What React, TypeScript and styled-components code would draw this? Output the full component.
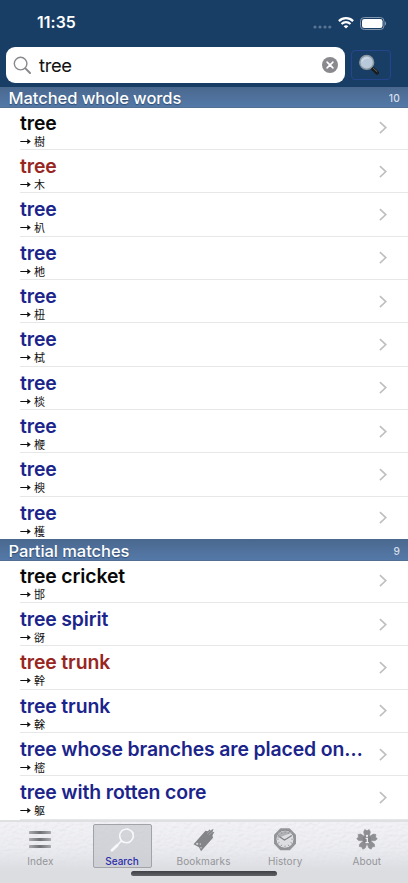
import React from "react";
import styled, { createGlobalStyle } from "styled-components";

const Global = createGlobalStyle`
  *, *::before, *::after { box-sizing: border-box; }
  body { margin: 0; background: #fff; font-family: Inter, "Noto Sans CJK JP", sans-serif; }
`;

const Screen = styled.div`
  width: 408px;
  height: 883px;
  display: flex;
  flex-direction: column;
  overflow: hidden;
  background: #fff;
`;

const TopBar = styled.header`
  height: 87px;
  flex: none;
  background: #193e66;
  display: flex;
  flex-direction: column;
`;

const StatusBar = styled.div`
  height: 47px;
  display: flex;
  align-items: center;
  justify-content: space-between;
  padding: 0 21px 1px 37px;
`;

const Clock = styled.span`
  color: #fff;
  font-size: 15.8px;
  font-weight: 600;
  line-height: 20px;
  letter-spacing: 0.1px;
`;

const StatusIcons = styled.div`
  display: flex;
  align-items: center;
  gap: 6px;
  svg { display: block; }
`;

const SignalDots = styled.svg`
  position: relative;
  top: 4px;
`;

const SearchRow = styled.div`
  display: flex;
  align-items: center;
  padding: 0 17px 0 6px;
  gap: 6px;
`;

const SearchField = styled.div`
  width: 339px;
  height: 36px;
  background: #fff;
  border-radius: 9px;
  display: flex;
  align-items: center;
  padding: 0 7px;
  svg { display: block; flex: none; }
`;

const Query = styled.span`
  flex: 1;
  margin-left: 7px;
  color: #111;
  font-size: 18.4px;
  line-height: 24px;
  letter-spacing: -0.35px;
`;

const LookupButton = styled.button`
  width: 40px;
  height: 30px;
  background: transparent;
  border: 1px solid #25468c;
  border-radius: 4px;
  display: flex;
  align-items: center;
  justify-content: center;
  padding: 0 4px 0 0;
  svg { display: block; }
`;

const SectionHeader = styled.h2<{ $tall?: boolean }>`
  margin: ${(p) => (p.$tall ? "-1px" : "0")} 0 -1.3px;
  height: ${(p) => (p.$tall ? "22px" : "21px")};
  position: relative;
  flex: none;
  display: flex;
  align-items: center;
  justify-content: space-between;
  padding: ${(p) => (p.$tall ? "3px" : "2px")} 8px 0 8.5px;
  background: linear-gradient(#4a688e, #5479a8);
  border-bottom: 1px solid #526e91;
  color: #fff;
  font-size: 16.5px;
  font-weight: 500;
  line-height: 20px;
  letter-spacing: -0.06px;
  text-shadow: 0 1px 1px rgba(20, 40, 70, 0.55);
`;

const Count = styled.span`
  font-size: 10.2px;
  color: #d5dfeb;
  text-shadow: none;
  letter-spacing: 0.2px;
`;

const List = styled.ul`
  margin: 0;
  padding: 0;
  list-style: none;
`;

const Row = styled.li`
  height: 43.33px;
  display: flex;
  align-items: center;
  padding-right: 20.5px;
  padding-left: 20px;
  background: linear-gradient(#e6e7e9, #e6e7e9) 20px 100% / 100% 1px no-repeat;
  svg { display: block; flex: none; }
`;

const Entry = styled.div`
  width: 344px;
  height: 100%;
  display: flex;
  flex-direction: column;
  padding-top: 4px;
`;

const Word = styled.span<{ $color: string }>`
  color: ${(p) => p.$color};
  font-size: 19.4px;
  font-weight: 600;
  line-height: 24px;
  letter-spacing: -0.12px;
  white-space: nowrap;
`;

const Gloss = styled.span`
  display: flex;
  align-items: center;
  gap: 3px;
  color: #111;
  font-family: "Noto Sans CJK JP", sans-serif;
  font-size: 11px;
  line-height: 13px;
`;

const Spacer = styled.div`
  flex: 1;
`;

const TabBar = styled.nav`
  height: 64px;
  position: relative;
  margin-top: auto;
  flex: none;
  background: linear-gradient(#efeff3, #e5e6eb 45%, #dcdde1 80%);
  border-top: 2px solid #dfe0e2;
  display: flex;
  padding-top: 2px;
`;

const Texture = styled.svg`
  position: absolute;
  inset: 0;
  width: 100%;
  height: 46px;
  mask-image: linear-gradient(#000 50%, transparent);
  opacity: 0.3;
`;

const Tab = styled.div`
  width: 81.6px;
  display: flex;
  justify-content: center;
`;

const TabInner = styled.div<{ $active?: boolean }>`
  position: relative;
  left: -0.4px;
  width: 59px;
  height: 44px;
  display: flex;
  flex-direction: column;
  align-items: center;
  padding-top: 1px;
  white-space: nowrap;
  border: 1px solid ${(p) => (p.$active ? "#a2a3a8" : "transparent")};
  border-radius: 2px;
  background: ${(p) => (p.$active ? "rgba(200,201,207,.7)" : "transparent")};
  color: ${(p) => (p.$active ? "#2a2daa" : "#949599")};
  font-size: 10px;
  font-weight: ${(p) => (p.$active ? 500 : 400)};
  line-height: 12px;
  letter-spacing: ${(p) => (p.$active ? "0" : "0.1px")};
  svg { display: block; margin-bottom: 3px; }
`;

const HomeIndicator = styled.div`
  position: absolute;
  left: 131px;
  bottom: 8px;
  width: 146px;
  height: 5px;
  border-radius: 3px;
  background: linear-gradient(#404146, #606165);
`;

const Magnifier = () => (
  <svg width="19" height="19" viewBox="0 0 19 19" fill="none" stroke="#88898d" strokeLinecap="round">
    <circle cx="7.6" cy="7.6" r="6.3" strokeWidth="1.4" />
    <path d="M12.4 12.4L17 17" strokeWidth="2" />
  </svg>
);

const Clear = () => (
  <svg width="16" height="16" viewBox="0 0 16 16">
    <circle cx="8" cy="8" r="8" fill="#89898e" />
    <path d="M5.1 5.1l5.8 5.8M10.9 5.1l-5.8 5.8" stroke="#fff" strokeWidth="1.6" strokeLinecap="round" />
  </svg>
);

const Loupe = () => (
  <svg width="22" height="22" viewBox="0 0 22 22">
    <path d="M12.8 12.6L15 15" stroke="#74787a" strokeWidth="2" />
    <path d="M14.8 14.6L19.2 18.8" stroke="#191b1d" strokeWidth="3.7" strokeLinecap="round" />
    <path d="M15 13.9L19.3 17.9" stroke="#77736b" strokeWidth="0.9" />
    <circle cx="8.7" cy="8.4" r="6.9" fill="#b8c9dc" stroke="#8b979d" strokeWidth="1.5" />
    <path d="M4 7.5C5 4.5 8 3.2 11 4.3" stroke="#d0dce8" strokeWidth="1.2" fill="none" />
  </svg>
);

const Chevron = () => (
  <svg width="10" height="14" viewBox="0 0 10 14">
    <path d="M1.9 1.1L7.8 6.6L1.9 12.1" fill="none" stroke="#bfbfc1" strokeWidth="1.6" />
  </svg>
);

const Arrow = () => (
  <svg width="11" height="7" viewBox="0 0 11 7">
    <path d="M0.3 2.9H7.3V0.8L10.8 3.5L7.3 6.2V4.1H0.3Z" fill="#111" />
  </svg>
);

const IndexIcon = () => (
  <svg width="24" height="26" viewBox="0 0 24 26">
    <defs>
      <linearGradient id="bar">
        <stop offset="0" stopColor="#a9aaad" />
        <stop offset=".5" stopColor="#707175" />
        <stop offset="1" stopColor="#a9aaad" />
      </linearGradient>
    </defs>
    {[5, 12, 19].map((y) => (
      <rect key={y} x="1" y={y} width="22" height="3" rx="0.4" fill="url(#bar)" />
    ))}
  </svg>
);

const SearchIcon = () => (
  <svg width="28" height="26" viewBox="0 0 28 26" fill="none" stroke="#f8f8fa" strokeLinecap="round">
    <circle cx="18.4" cy="9.9" r="6.8" strokeWidth="1.4" />
    <path d="M11.8 8.5L14.5 4L20 2.6L25.4 6.2L25.6 12L21.5 16.8L14 16Z" strokeWidth=".8" />
    <path d="M13.5 14.7L9 19.4" strokeWidth="1.6" />
    <path d="M9 19.4L4 24.2" strokeWidth="2.8" />
  </svg>
);

const BookmarkIcon = () => (
  <svg width="26" height="26" viewBox="0 0 26 26">
    <path d="M2.5 18.3L14.5 4.8L17 5.3L18.5 3.3L19.5 4.8L22.5 2.8L21.5 6.3L23.5 5.8L21.5 9.3L22 11.8L10 25.2L8 21.3Z" fill="#848588" />
    <path d="M16 7.8L20.5 3.8M17.8 9.1L22 5.3" stroke="#a9aaad" strokeWidth=".8" />
    <circle cx="6.2" cy="17.8" r="1.1" fill="#d5d6da" />
    <circle cx="9.3" cy="18.1" r=".8" fill="#c9cace" />
    <circle cx="10" cy="21.8" r=".8" fill="#c9cace" />
  </svg>
);

const HistoryIcon = () => (
  <svg width="24" height="26" viewBox="0 0 24 26">
    <path d="M7.5 2.2H16.5L23 8.8V17.7L16.8 24.2H7.2L1 17.7V8.8Z" fill="#949598" />
    <circle cx="12" cy="13.2" r="9" fill="#dddee2" stroke="#85868a" strokeWidth=".8" />
    <path d="M4 10.5C6 5.5 12 3.5 18.5 7L12 9.2L5 12Z" fill="#b0b1b4" />
    <path d="M6.5 10.8L11.5 14L18.5 9.8" fill="none" stroke="#808185" strokeWidth="1.2" />
    {[0, 30, 60, 90, 120, 150, 180, 210, 240, 270, 300, 330].map((a) => (
      <path key={a} d="M12 5.4V6.8" stroke="#85868a" strokeWidth=".8" transform={`rotate(${a} 12 13.2)`} />
    ))}
  </svg>
);

const AboutIcon = () => (
  <svg width="24" height="26" viewBox="0 0 24 26">
    {[0, 72, 144, 216, 288].map((a) => (
      <path
        key={a}
        d="M10.6 13.7L8.6 6L9.8 3.6L12 4.8L14.2 3.6L15.4 6L13.4 13.7Z"
        fill="#8e8f92"
        stroke="#8e8f92"
        strokeWidth=".6"
        transform={`rotate(${a} 12 13.7)`}
      />
    ))}
    <circle cx="12" cy="13.7" r="4.2" fill="#838487" />
    <circle cx="12" cy="9.9" r="1.1" fill="#f3f3f5" />
    <path d="M10.6 12.3H12.3V16.4M10.4 16.6H13.8" stroke="#f3f3f5" strokeWidth="1.3" fill="none" />
  </svg>
);

const BLACK = "#080808";
const RED = "#98261f";
const BLUE = "#1b248b";

type Item = [word: string, character: string, color: string];

const whole: Item[] = [
  ["tree", "樹", BLACK],
  ["tree", "木", RED],
  ["tree", "朳", BLUE],
  ["tree", "杝", BLUE],
  ["tree", "杻", BLUE],
  ["tree", "栻", BLUE],
  ["tree", "棪", BLUE],
  ["tree", "楩", BLUE],
  ["tree", "楰", BLUE],
  ["tree", "檴", BLUE],
];

const partial: Item[] = [
  ["tree cricket", "邯", BLACK],
  ["tree spirit", "谺", BLUE],
  ["tree trunk", "幹", RED],
  ["tree trunk", "榦", BLUE],
  ["tree whose branches are placed on…", "樒", BLUE],
  ["tree with rotten core", "躯", BLUE],
];

const Results = ({ items }: { items: Item[] }) => (
  <List>
    {items.map(([word, character, color]) => (
      <Row key={character}>
        <Entry>
          <Word $color={color}>{word}</Word>
          <Gloss>
            <Arrow />
            {character}
          </Gloss>
        </Entry>
        <Spacer />
        <Chevron />
      </Row>
    ))}
  </List>
);

const tabs = [
  { label: "Index", Icon: IndexIcon },
  { label: "Search", Icon: SearchIcon, active: true },
  { label: "Bookmarks", Icon: BookmarkIcon },
  { label: "History", Icon: HistoryIcon },
  { label: "About", Icon: AboutIcon },
];

export default function App() {
  return (
    <Screen>
      <Global />
      <TopBar>
        <StatusBar>
          <Clock>11:35</Clock>
          <StatusIcons>
            <SignalDots width="19" height="4" viewBox="0 0 19 4">
              {[2, 7, 12, 16.8].map((x) => (
                <circle key={x} cx={x} cy="2" r="1.6" fill="#5a7593" />
              ))}
            </SignalDots>
            <svg width="16" height="12" viewBox="0 0 16 12" fill="none" stroke="#fff">
              <path d="M0.9 4.1C4.9 0.2 11.1 0.2 15.1 4.1" strokeWidth="2.2" />
              <path d="M3.5 6.9C6 4.5 10 4.5 12.5 6.9" strokeWidth="2.1" />
              <path d="M8 11.5L5.7 9.2C7 8 9 8 10.3 9.2Z" fill="#fff" stroke="none" />
            </svg>
            <svg width="27" height="13" viewBox="0 0 27 13">
              <rect x=".5" y=".5" width="23.5" height="12" rx="3.7" fill="none" stroke="#8296ad" />
              <rect x="2" y="2" width="20.5" height="9" rx="2.3" fill="#fff" />
              <path d="M25 4.5C26.5 5 26.5 8 25 8.5Z" fill="#8296ad" />
            </svg>
          </StatusIcons>
        </StatusBar>
        <SearchRow>
          <SearchField>
            <Magnifier />
            <Query>tree</Query>
            <Clear />
          </SearchField>
          <LookupButton aria-label="Search">
            <Loupe />
          </LookupButton>
        </SearchRow>
      </TopBar>
      <SectionHeader>
        Matched whole words<Count>10</Count>
      </SectionHeader>
      <Results items={whole} />
      <SectionHeader $tall>
        Partial matches<Count>9</Count>
      </SectionHeader>
      <Results items={partial} />
      <TabBar>
        <Texture aria-hidden="true">
          <filter id="leather">
            <feTurbulence type="fractalNoise" baseFrequency="0.22 0.35" numOctaves="2" seed="4" result="n" />
            <feDiffuseLighting in="n" surfaceScale="0.9" diffuseConstant="1.08" lightingColor="#f8f8fc">
              <feDistantLight azimuth="240" elevation="66" />
            </feDiffuseLighting>
          </filter>
          <rect width="100%" height="100%" filter="url(#leather)" />
        </Texture>
        {tabs.map(({ label, Icon, active }) => (
          <Tab key={label}>
            <TabInner $active={active}>
              <Icon />
              {label}
            </TabInner>
          </Tab>
        ))}
        <HomeIndicator />
      </TabBar>
    </Screen>
  );
}
